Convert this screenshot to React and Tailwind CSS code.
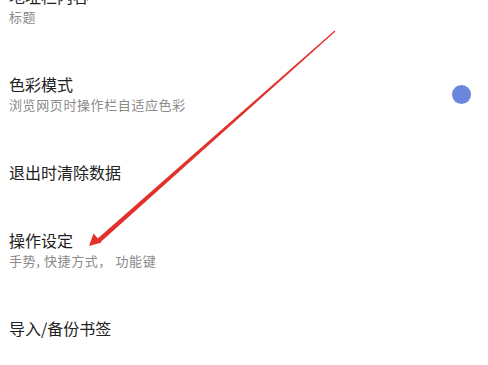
import React from 'react';

const rows = [
  { title: '地址栏内容', sub: '标题' },
  { title: '色彩模式', sub: '浏览网页时操作栏自适应色彩', toggle: true },
  { title: '退出时清除数据' },
  { title: '操作设定', sub: '手势, 快捷方式， 功能键' },
  { title: '导入/备份书签' },
];

function Arrow() {
  // tapered red arrow drawn over the list
  return (
    <svg className="absolute inset-0 pointer-events-none" width="488" height="365" viewBox="0 0 488 365">
      <polygon points="335.4,31.6 334.6,30.4 96,240 99,243.6" fill="#e2312b" />
      <polygon points="89,246 93.5,233.5 101.5,242.5" fill="#e2312b" />
    </svg>
  );
}

export default function App() {
  return (
    <div
      className="relative w-[488px] h-[365px] overflow-hidden bg-white"
      style={{ fontFamily: '"Noto Sans CJK SC", "Noto Sans", sans-serif' }}
    >
      <div className="-mt-[38px] flex flex-col">
        {rows.map((r) => (
          <div
            key={r.title}
            className={`flex items-center justify-between pl-[9px] pr-[17px] ${r.sub ? 'h-[88px]' : 'h-[68px]'}`}
          >
            <div className="flex flex-col">
              <span className="text-[16px] leading-[22px] text-[#222222]">{r.title}</span>
              {r.sub && (
                <span className="text-[13px] leading-[20px] tracking-[0.6px] text-[#8a8a8a]">{r.sub}</span>
              )}
            </div>
            {r.toggle && <span className="w-[19px] h-[19px] rounded-full bg-[#6b87dd]" />}
          </div>
        ))}
      </div>
      <Arrow />
    </div>
  );
}
